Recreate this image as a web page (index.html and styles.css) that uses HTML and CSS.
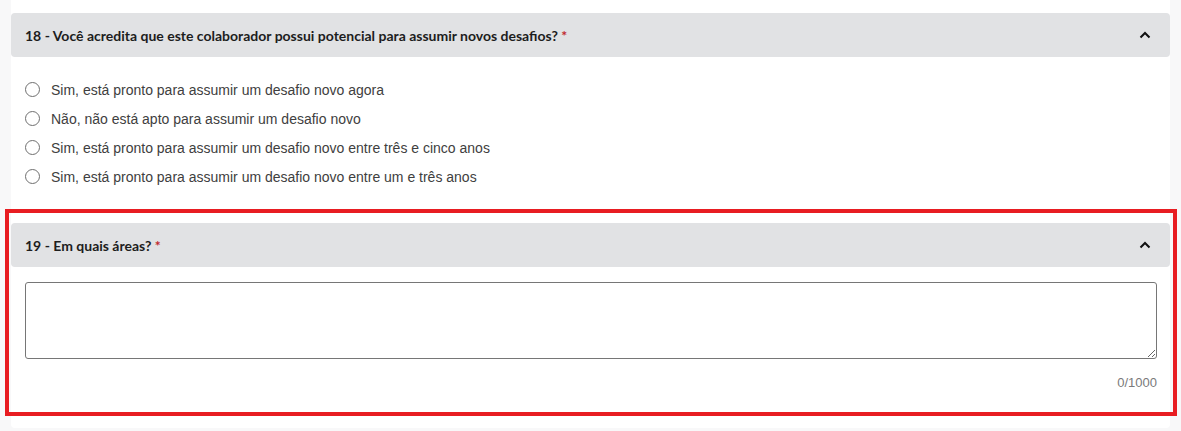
FILE: index.html
```html
<!DOCTYPE html>
<html>
<head>
	<meta charset="utf-8" />
	<title>Avaliação</title>
	<link rel="stylesheet" href="styles.css">
</head>
<body>
	<div class="page">
		<div class="card">
			<div class="question">
				<div class="q-head">
					<span class="q-title">18 - Você acredita que este colaborador possui potencial para assumir novos desafios? <span class="req">*</span></span>
					<svg class="chevron" width="12" height="8" viewBox="0 0 12 8"><polyline points="1.5,6.5 6,2 10.5,6.5" fill="none" stroke="#111" stroke-width="2"/></svg>
				</div>
				<div class="options">
					<label class="option"><span class="radio"></span>Sim, está pronto para assumir um desafio novo agora</label>
					<label class="option"><span class="radio"></span>Não, não está apto para assumir um desafio novo</label>
					<label class="option"><span class="radio"></span>Sim, está pronto para assumir um desafio novo entre três e cinco anos</label>
					<label class="option"><span class="radio"></span>Sim, está pronto para assumir um desafio novo entre um e três anos</label>
				</div>
			</div>
			<div class="highlight">
				<div class="question">
					<div class="q-head">
						<span class="q-title">19 - Em quais áreas? <span class="req">*</span></span>
						<svg class="chevron" width="12" height="8" viewBox="0 0 12 8"><polyline points="1.5,6.5 6,2 10.5,6.5" fill="none" stroke="#111" stroke-width="2"/></svg>
					</div>
					<div class="answer">
						<textarea class="text-answer"></textarea>
						<div class="counter">0/1000</div>
					</div>
				</div>
			</div>
		</div>
	</div>
</body>
</html>
```

FILE: styles.css
```css
body {
	margin: 0;
	background: #f8f8f9;
	font-family: 'Liberation Sans', Arial, sans-serif;
}
.page {
	padding: 0 11px;
}
.card {
	background: #ffffff;
	padding: 13px 0 12px 0;
	border-radius: 0 0 4px 4px;
}
.q-head {
	height: 44px;
	display: flex;
	align-items: center;
	justify-content: space-between;
	padding: 0 19px 0 14px;
	background: #e1e2e4;
	border-radius: 4px;
}
.q-title {
	font-family: 'Lato', sans-serif;
	font-weight: 700;
	font-size: 14px;
	color: #1d1d1d;
}
.req {
	color: #c0272d;
}
.chevron {
	display: block;
}
.options {
	margin-top: 18px;
	padding-left: 14px;
}
.option {
	display: flex;
	align-items: center;
	height: 29px;
	font-size: 14px;
	color: #404040;
}
.radio {
	width: 13px;
	height: 13px;
	border: 1px solid #6f6f6f;
	border-radius: 50%;
	margin-right: 11px;
}
.highlight {
	margin: 18px -7px 0 -6px;
	border: 4px solid #e81d22;
	padding: 10px 3px 0 2px;
}
.answer {
	padding: 15px 13px 21px 14px;
}
.text-answer {
	display: block;
	box-sizing: border-box;
	width: 100%;
	height: 77px;
	border: 1px solid #767676;
	border-radius: 3px;
	font-family: 'Liberation Sans', Arial, sans-serif;
}
.counter {
	margin-top: 16px;
	text-align: right;
	font-size: 13px;
	line-height: 16px;
	color: #7a7a7a;
}
```
